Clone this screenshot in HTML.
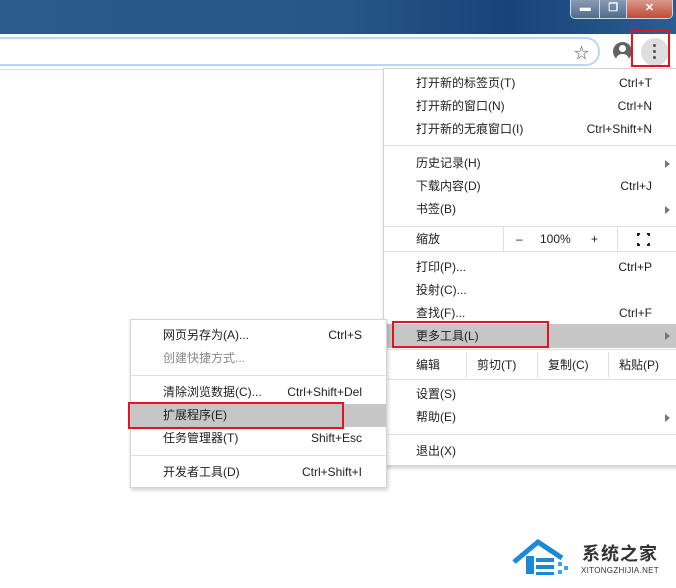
<!DOCTYPE html>
<html><head><meta charset="utf-8"><style>
*{margin:0;padding:0;box-sizing:border-box}
body{width:676px;height:588px;background:#fff;position:relative;overflow:hidden;font-family:"Liberation Sans","Noto Sans CJK SC",sans-serif;font-size:12px;color:#202124}
.a{position:absolute}
.title{left:0;top:0;width:676px;height:34px;background:linear-gradient(90deg,#2a5a8e 0%,#27578a 50%,#17437a 75%,#2b5d92 100%)}
.btns{left:570px;top:0;height:19px;width:103px;border:1px solid #cfd8e4;border-top:none;border-radius:0 0 5px 5px;overflow:hidden;display:flex}
.btns div{height:100%;border-right:1px solid #cfd8e4;color:#fff;text-align:center;font-weight:bold;font-size:11px;line-height:16px}
.menu{background:#fff;border:1px solid #d4d4d4;box-shadow:1px 2px 4px rgba(0,0,0,.2)}
.it{position:absolute;left:0;right:0;height:23px;line-height:23px}
.it .l{position:absolute}
.it .r{position:absolute;text-align:right}
.sep{position:absolute;left:0;right:0;height:1px;background:#e0e0e0}
.hl{background:#c6c6c6}
.box{position:absolute;border:2px solid #e3141f}
.arr{position:absolute;right:6px;top:8px;width:0;height:0;border-left:5px solid #777;border-top:4px solid transparent;border-bottom:4px solid transparent}
</style></head><body>
<div class="a title"></div>
<div class="a btns"><div style="width:30px;background:linear-gradient(#8a9cb3,#4d6a8e)">▬</div><div style="width:27px;background:linear-gradient(#8a9cb3,#4d6a8e)">❐</div><div style="width:46px;border:none;background:linear-gradient(#d99a8c,#c04a36)">✕</div></div>
<div class="a" style="left:0;top:34px;width:676px;height:36px;background:#fff;border-bottom:1px solid #dcdcdc"></div>
<div class="a" style="left:-20px;top:37px;width:620px;height:29px;border:2px solid #bcd7f3;border-radius:14px;background:#fff"></div>
<div class="a" style="left:574px;top:42px;font-size:15px;color:#555">☆</div>
<div class="a" style="left:613px;top:42px;width:19px;height:19px;border-radius:50%;background:#5f6368;overflow:hidden"><div class="a" style="left:6px;top:3px;width:7px;height:7px;border-radius:50%;background:#fff"></div><div class="a" style="left:3px;top:12px;width:13px;height:9px;border-radius:6px 6px 0 0;background:#fff"></div></div>
<div class="a" style="left:641px;top:38px;width:28px;height:28px;border-radius:50%;background:#dedede"></div>
<div class="a" style="left:653px;top:44px;width:3px;height:3px;background:#555;border-radius:50%;box-shadow:0 6px #555,0 12px #555"></div>
<div class="box" style="left:631px;top:30px;width:39px;height:37px"></div>

<div class="a menu" style="left:383px;top:68px;width:294px;height:398px">
 <div class="it" style="top:3px"><span class="l" style="left:32px">打开新的标签页(T)</span><span class="r" style="right:24px">Ctrl+T</span></div>
 <div class="it" style="top:26px"><span class="l" style="left:32px">打开新的窗口(N)</span><span class="r" style="right:24px">Ctrl+N</span></div>
 <div class="it" style="top:49px"><span class="l" style="left:32px">打开新的无痕窗口(I)</span><span class="r" style="right:24px">Ctrl+Shift+N</span></div>
 <div class="sep" style="top:76px"></div>
 <div class="it" style="top:83px"><span class="l" style="left:32px">历史记录(H)</span><div class="arr"></div></div>
 <div class="it" style="top:106px"><span class="l" style="left:32px">下载内容(D)</span><span class="r" style="right:24px">Ctrl+J</span></div>
 <div class="it" style="top:129px"><span class="l" style="left:32px">书签(B)</span><div class="arr"></div></div>
 <div class="sep" style="top:157px"></div>
 <div class="it" style="top:158px;height:24px;line-height:24px"><span class="l" style="left:32px">缩放</span>
  <div class="a" style="left:119px;top:0;width:1px;height:24px;background:#e0e0e0"></div>
  <span class="l" style="left:132px">–</span><span class="l" style="left:156px">100%</span><span class="l" style="left:207px">+</span>
  <div class="a" style="left:233px;top:0;width:1px;height:24px;background:#e0e0e0"></div>
  <div class="a" style="left:253px;top:6px;width:13px;height:13px;border:2px solid #222"></div>
  <div class="a" style="left:256px;top:4px;width:7px;height:17px;background:#fff"></div>
  <div class="a" style="left:251px;top:9px;width:17px;height:7px;background:#fff"></div>
 </div>
 <div class="sep" style="top:182px"></div>
 <div class="it" style="top:187px"><span class="l" style="left:32px">打印(P)...</span><span class="r" style="right:24px">Ctrl+P</span></div>
 <div class="it" style="top:210px"><span class="l" style="left:32px">投射(C)...</span></div>
 <div class="it" style="top:233px"><span class="l" style="left:32px">查找(F)...</span><span class="r" style="right:24px">Ctrl+F</span></div>
 <div class="it hl" style="top:255px;height:24px;line-height:24px"><span class="l" style="left:32px">更多工具(L)</span><div class="arr"></div></div>
 <div class="sep" style="top:280px"></div>
 <div class="it" style="top:283px;height:26px;line-height:26px"><span class="l" style="left:32px">编辑</span>
  <div class="a" style="left:82px;top:0;width:1px;height:26px;background:#e0e0e0"></div><span class="l" style="left:93px">剪切(T)</span>
  <div class="a" style="left:153px;top:0;width:1px;height:26px;background:#e0e0e0"></div><span class="l" style="left:164px">复制(C)</span>
  <div class="a" style="left:224px;top:0;width:1px;height:26px;background:#e0e0e0"></div><span class="l" style="left:235px">粘贴(P)</span>
 </div>
 <div class="sep" style="top:310px"></div>
 <div class="it" style="top:314px"><span class="l" style="left:32px">设置(S)</span></div>
 <div class="it" style="top:337px"><span class="l" style="left:32px">帮助(E)</span><div class="arr"></div></div>
 <div class="sep" style="top:365px"></div>
 <div class="it" style="top:371px"><span class="l" style="left:32px">退出(X)</span></div>
</div>
<div class="box" style="left:392px;top:321px;width:157px;height:27px"></div>

<div class="a menu" style="left:130px;top:319px;width:257px;height:169px">
 <div class="it" style="top:4px"><span class="l" style="left:32px">网页另存为(A)...</span><span class="r" style="right:24px">Ctrl+S</span></div>
 <div class="it" style="top:27px;color:#888"><span class="l" style="left:32px">创建快捷方式...</span></div>
 <div class="sep" style="top:55px"></div>
 <div class="it" style="top:61px"><span class="l" style="left:32px">清除浏览数据(C)...</span><span class="r" style="right:24px">Ctrl+Shift+Del</span></div>
 <div class="it hl" style="top:84px"><span class="l" style="left:32px">扩展程序(E)</span></div>
 <div class="it" style="top:107px"><span class="l" style="left:32px">任务管理器(T)</span><span class="r" style="right:24px">Shift+Esc</span></div>
 <div class="sep" style="top:135px"></div>
 <div class="it" style="top:141px"><span class="l" style="left:32px">开发者工具(D)</span><span class="r" style="right:24px">Ctrl+Shift+I</span></div>
</div>
<div class="box" style="left:128px;top:402px;width:216px;height:27px"></div>

<svg class="a" style="left:512px;top:538px" width="66" height="40" viewBox="0 0 66 40">
 <path d="M2 24 L26 4 L50 20" fill="none" stroke="#1a8ad8" stroke-width="5"/>
 <rect x="14" y="18" width="8" height="18" fill="#1a8ad8"/>
 <rect x="24" y="20" width="18" height="4" fill="#1a8ad8"/><rect x="24" y="27" width="18" height="4" fill="#1a8ad8"/><rect x="24" y="34" width="18" height="3" fill="#1a8ad8"/>
 <rect x="46" y="24" width="4" height="4" fill="#3aa3e8"/><rect x="52" y="28" width="4" height="4" fill="#3aa3e8"/><rect x="46" y="32" width="4" height="4" fill="#3aa3e8"/>
</svg>
<div class="a" style="left:582px;top:540px;font-size:18px;color:#333;font-weight:bold;letter-spacing:1px">系统之家</div>
<div class="a" style="left:581px;top:566px;font-size:8px;color:#333;letter-spacing:0.3px">XITONGZHIJIA.NET</div>
</body></html>
